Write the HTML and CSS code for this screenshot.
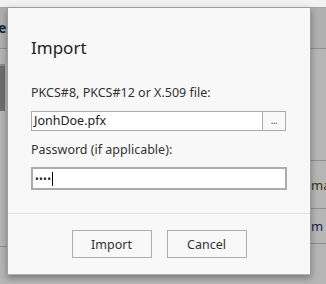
FILE: index.html
```html
<!DOCTYPE html>
<html lang="en">
<head>
  <meta charset="UTF-8" />
  <title>Import certificate</title>
  <link rel="stylesheet" href="styles.css">
</head>
<body>
<div class="page">
  <div class="topband"></div>
  <div class="header">
    <span class="header-title">er</span>
  </div>
  <div class="content">
    <div class="left-col">
      <div class="avatar"></div>
      <div class="left-line"></div>
    </div>
    <div class="right-col">
      <div class="cell cell-first"></div>
      <div class="cell cell-tall"><span class="cell-text orange">ma</span></div>
      <div class="cell cell-short"><span class="cell-text blue">m 5</span></div>
    </div>
  </div>
</div>

<div class="dialog" role="dialog" aria-labelledby="dlgTitle">
  <div class="dialog-body">
    <h1 id="dlgTitle">Import</h1>
    <label class="label label-file">PKCS#8, PKCS#12 or X.509 file:</label>
    <div class="file-row">
      <div class="file-input">JonhDoe.pfx</div>
      <button class="browse">...</button>
    </div>
    <label class="label label-pass">Password (if applicable):</label>
    <div class="pass-input"><span class="dots">&bull;&bull;&bull;&bull;</span><span class="caret"></span></div>
  </div>
  <div class="dialog-footer">
    <button class="btn">Import</button>
    <button class="btn">Cancel</button>
  </div>
</div>
</body>
</html>
```

FILE: styles.css
```css
body {
  margin: 0;
  background: #b6b6b6;
  font-family: "Noto Sans", "Open Sans", Arial, sans-serif;
  color: #222;
  width: 326px;
  height: 284px;
  overflow: hidden;
  position: relative;
}
.page {
  display: flex;
  flex-direction: column;
  height: 284px;
}
.topband {
  height: 7px;
  background: #f2f2f2;
  border-bottom: 1px solid #a4a4a4;
}
.header {
  height: 40px;
  background: #b0b0b0;
  border-bottom: 1px solid #8e8e8e;
  display: flex;
  align-items: center;
}
.header-title {
  margin-left: -2px;
  margin-top: -2px;
  font-size: 14px;
  font-weight: 700;
  color: #1e2440;
}
.content {
  flex: 1;
  display: flex;
  justify-content: space-between;
}
.left-col {
  width: 8px;
  display: flex;
  flex-direction: column;
}
.avatar {
  margin-top: 15px;
  width: 5px;
  height: 45px;
  background: #6e6e6e;
  border-top: 2px solid #8a8a8a;
}
.left-line {
  margin-top: 135px;
  border-top: 1px solid #8e8e8e;
}
.right-col {
  width: 15px;
  display: flex;
  flex-direction: column;
}
.cell {
  border-bottom: 1px solid #8e8e8e;
  display: flex;
  align-items: center;
  overflow: hidden;
  white-space: nowrap;
}
.cell-first { height: 111px; }
.cell-tall { height: 47px; }
.cell-short { height: 34px; }
.cell-text {
  font-size: 13px;
}
.orange { color: #3a3218; }
.blue { color: #20205a; }

.dialog {
  position: absolute;
  left: 7px;
  top: 7px;
  width: 302px;
  height: 266px;
  background: #f8f8f8;
  border: 1px solid #9e9e9e;
  border-bottom-color: #b0b0b0;
  box-shadow: 0 3px 7px rgba(0, 0, 0, 0.35);
  display: flex;
  flex-direction: column;
}
.dialog-body {
  padding: 30px 23px 0 23px;
  display: flex;
  flex-direction: column;
}
h1 {
  margin: 0;
  font-size: 17px;
  line-height: 20px;
  font-weight: 400;
  color: #222;
}
.label {
  font-size: 12.5px;
  line-height: 16px;
  color: #333;
}
.label-file { margin-top: 27px; }
.label-pass { margin-top: 11px; }
.file-row {
  margin-top: 10px;
  display: flex;
  height: 20px;
}
.file-input {
  flex: 1;
  background: #fff;
  border: 1px solid #ababab;
  font-size: 12.5px;
  line-height: 18px;
  padding-left: 2px;
  color: #222;
}
.browse {
  width: 23px;
  height: 20px;
  margin: 0 1px 0 0;
  padding: 0 0 2px;
  border: 1px solid #ababab;
  border-left: none;
  background: #f8f8f8;
  font-family: inherit;
  font-size: 10px;
  font-weight: 400;
  color: #3a6a9a;
  letter-spacing: -0.5px;
}
.pass-input {
  margin-top: 9px;
  height: 19px;
  background: #fff;
  border: 2px solid #acacac;
  display: flex;
  align-items: center;
  padding-left: 2px;
}
.dots {
  font-size: 10px;
  letter-spacing: 0.3px;
  color: #222;
}
.caret {
  width: 1px;
  height: 14px;
  background: #000;
  margin-left: 1px;
}
.dialog-footer {
  margin-top: 23px;
  border-top: 1px solid #e2e2e2;
  padding-top: 16px;
  display: flex;
  justify-content: center;
  gap: 15px;
}
.btn {
  width: 80px;
  height: 28px;
  margin: 0;
  border: 1px solid #adadad;
  background: #f8f8f8;
  font-family: inherit;
  font-size: 12.5px;
  color: #333;
}
```
